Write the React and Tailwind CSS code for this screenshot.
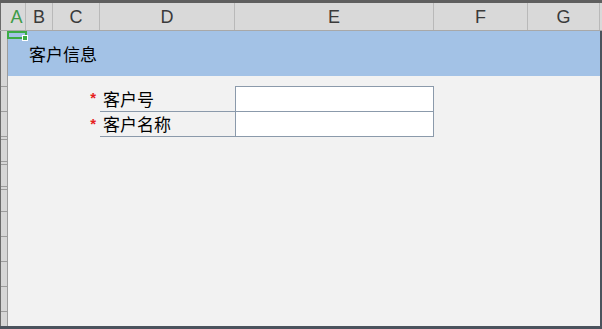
import React from 'react';

// Column headers: letter + width in px
const columns = [
    { label: 'A', width: 18, active: true },
    { label: 'B', width: 27 },
    { label: 'C', width: 47 },
    { label: 'D', width: 135 },
    { label: 'E', width: 199 },
    { label: 'F', width: 94 },
    { label: 'G', width: 72 },
];

// Row header segment heights (px, border included)
const rowHeights = [56, 25, 25, 3, 22, 3, 22, 3, 22, 25, 25, 25, 25];

const fields = [
    { label: '客户号' },
    { label: '客户名称' },
];

const cjk = { fontFamily: '"Noto Sans CJK SC", "Liberation Sans", sans-serif' };

function ColumnHeader() {
    return (
        <div className="flex h-[28px] bg-[#d9d9d9] border-b border-[#a8a8a8]">
            <div className="w-[8px] shrink-0 border-l border-[#6a6a6a]" />
            {columns.map(col => (
                <div
                    key={col.label}
                    style={{ width: col.width }}
                    className={`shrink-0 flex items-center justify-center border-r border-[#b9b9b9] text-[18px] leading-none font-['Liberation_Sans',sans-serif] ${col.active ? 'text-[#3f9b47]' : 'text-[#3a3a3a]'}`}
                >
                    {col.label}
                </div>
            ))}
            <div className="flex-1" />
        </div>
    );
}

function RowHeader() {
    return (
        <div className="w-[8px] shrink-0 flex flex-col border-l border-[#6a6a6a] bg-[#d6d6d6] border-r border-r-[#9c9c9c]">
            {rowHeights.map((h, i) => (
                <div key={i} style={{ height: h }} className="shrink-0 border-b border-[#9c9c9c]" />
            ))}
            <div className="flex-1" />
        </div>
    );
}

function FormRow({ label, first }) {
    return (
        <div className={`flex ${first ? 'h-[26px]' : 'h-[25px]'}`}>
            <div className="w-[92px] shrink-0 flex justify-end pr-[4px] pt-[4px]">
                <span className="text-[#e61e1e] text-[15px] font-bold leading-none font-['Liberation_Sans',sans-serif]">*</span>
            </div>
            <div className="w-[135px] shrink-0 flex items-center pl-[3px] border-b border-[#8b9aab] text-[17px] text-black" style={cjk}>
                {label}
            </div>
            <div className={`w-[199px] shrink-0 bg-white border-x border-b border-[#8b9aab] ${first ? 'border-t' : ''}`} />
        </div>
    );
}

export default function App() {
    return (
        <div className="w-[602px] h-[329px] flex flex-col bg-[#4b535d] overflow-hidden">
            <div className="h-[3px] shrink-0 bg-[#5f5f5f]" />
            <ColumnHeader />
            <div className="relative flex h-[295px] shrink-0">
                <RowHeader />
                <div className="flex-1 flex flex-col bg-[#f2f2f2]">
                    <div className="h-[45px] shrink-0 bg-[#a3c2e6] flex items-center pl-[21px] text-[17px] text-black" style={cjk}>
                        客户信息
                    </div>
                    <div className="mt-[10px] flex flex-col">
                        {fields.map((f, i) => (
                            <FormRow key={f.label} label={f.label} first={i === 0} />
                        ))}
                    </div>
                </div>
                <div className="w-[2px] shrink-0 bg-[#4b535d]" />

                {/* active cell marker */}
                <div className="absolute left-[7px] top-0 w-[20px] h-[8px] border-2 border-[#3cab44]" />
                <div className="absolute left-[22px] top-[4px] w-[6px] h-[6px] bg-[#3cab44] border border-white" />
            </div>
        </div>
    );
}
